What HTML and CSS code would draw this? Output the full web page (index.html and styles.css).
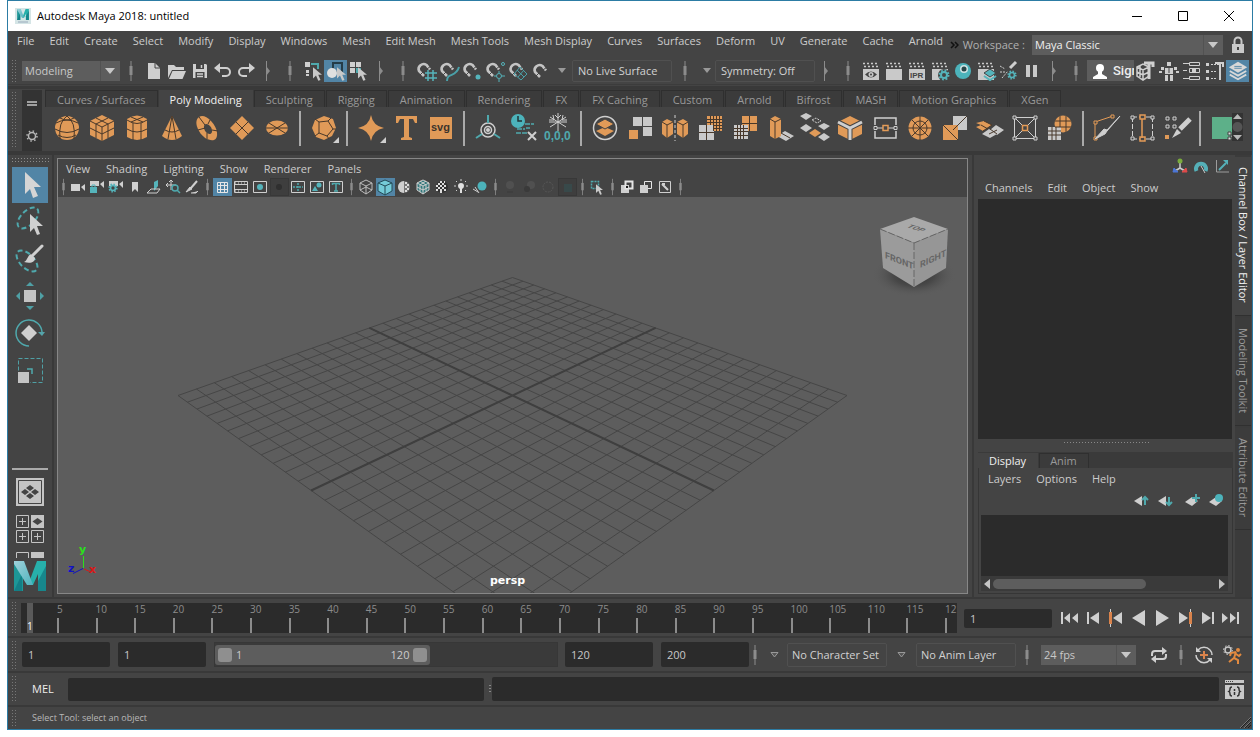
FILE: index.html
```html
<!DOCTYPE html>
<html lang="en">
<head>
<meta charset="utf-8">
<title>Autodesk Maya 2018: untitled</title>
<link rel="stylesheet" href="styles.css">
</head>
<body>
<svg class="defs" aria-hidden="true">
  <defs>
    <linearGradient id="mayaLeft" x1="0" y1="0" x2="1" y2="1"><stop offset="0" stop-color="#9fd3dc"/><stop offset="1" stop-color="#4fb3bd"/></linearGradient>
    <symbol id="maya-m" viewBox="0 0 32 30">
      <path fill="#1d9797" d="M0 0h9v30H0z"/><path fill="#137f86" d="M0 30 8 13v17z"/>
      <path fill="#27b0ab" d="M23 0h9v30h-8V13l-5 11h-5z"/><path fill="#17878c" d="M32 5 24 20v10h8z"/>
      <path fill="url(#mayaLeft)" d="M0 0h10l9 24h-6L0 3z"/>
    </symbol>
    <symbol id="sep" viewBox="0 0 6 22"><path d="M3 1v20" stroke="#8c8c8c"/><path d="M3 6v9" stroke="#8c8c8c" stroke-width="3"/></symbol>
    <symbol id="fold" viewBox="0 0 6 22"><path d="M1.500 1v20" stroke="#8c8c8c"/><path d="M1 6l4 5-4 5z" fill="#8c8c8c"/></symbol>
    <symbol id="cursor" viewBox="0 0 12 18"><path d="M0 0v15l4-4 3 7 3-1-3-7h5z" fill="#c9c9c9"/></symbol>
    <symbol id="magnet" viewBox="0 0 22 22"><path d="M15 9.500 11.500 5A5 5 0 0 0 4 11l5 5" fill="none" stroke="#c4c4c4" stroke-width="2.600"/><path d="M12 9l4-3M5 15l3-3" stroke="#444"/></symbol>
    <symbol id="clap" viewBox="0 0 22 22"><path d="M3 9h16v11H3z" fill="#c9c9c9"/><path d="M3 3.500h16M4 6.500h16" stroke="#c9c9c9" stroke-width="1.500" stroke-dasharray="2 2"/></symbol>
    <symbol id="gear" viewBox="0 0 12 12"><circle cx="6" cy="6" r="4.500" fill="none" stroke="currentColor" stroke-width="2" stroke-dasharray="1.800 1.730"/><circle cx="6" cy="6" r="3" fill="none" stroke="currentColor" stroke-width="2"/></symbol>
    <symbol id="layers" viewBox="0 0 24 24"><path d="M3 16l9 5 9-5M3 12l9 5 9-5" fill="none" stroke="#d8d8d8" stroke-width="2"/><path d="M12 2l10 6-10 6L2 8z" fill="#d8d8d8"/><path d="M8 7h8M8 9h8" stroke="#5285a6"/></symbol>
    <symbol id="caret" viewBox="0 0 10 6"><path d="M0 0h10L5 6z" fill="currentColor"/></symbol>
  </defs>
</svg>
<div class="window">
  <header class="titlebar">
    <svg class="app-icon" width="16" height="16"><rect width="16" height="16" fill="#d5e5e6"/><use href="#maya-m" x="2" y="1" width="12" height="11"/><path d="M3 14h10" stroke="#9ab" /></svg>
    <h1>Autodesk Maya 2018: untitled</h1>
    <div class="win-buttons">
      <button aria-label="Minimize"><svg width="12" height="12"><path d="M1 6.500h10" stroke="#000"/></svg></button>
      <button aria-label="Maximize"><svg width="12" height="12"><path d="M1.500 1.500h9v9h-9z" fill="none" stroke="#000"/></svg></button>
      <button aria-label="Close"><svg width="12" height="12"><path d="M1 1l10 10M11 1 1 11" stroke="#000"/></svg></button>
    </div>
  </header>

  <div class="menubar">
    <nav class="menus main-menus">
      <button>File</button><button>Edit</button><button>Create</button><button>Select</button><button>Modify</button><button>Display</button><button>Windows</button><button>Mesh</button><button>Edit Mesh</button><button>Mesh Tools</button><button>Mesh Display</button><button>Curves</button><button>Surfaces</button><button>Deform</button><button>UV</button><button>Generate</button><button>Cache</button><button>Arnold</button>
    </nav>
    <div class="workspace">
      <svg width="9" height="8"><path d="M1 1l3 3-3 3M5 1l3 3-3 3" fill="none" stroke="#111" stroke-width="1.500"/></svg>
      <label for="ws">Workspace :</label>
      <span class="combo ws"><select id="ws"><option>Maya Classic</option></select><svg width="10" height="6"><use href="#caret"/></svg></span>
      <button class="lock" aria-label="Lock workspace"><svg width="14" height="18"><path d="M3.500 8V5a3.500 3.500 0 0 1 7 0v3" fill="none" stroke="#c9c9c9" stroke-width="2"/><path d="M1 8h12v9H1z" fill="#c9c9c9"/><path d="M7 11v3" stroke="#444" stroke-width="2"/></svg></button>
    </div>
  </div>

  <div class="statusline">
    <i class="grip"></i>
    <span class="combo mode"><select aria-label="Menu set"><option>Modeling</option></select><svg width="10" height="6"><use href="#caret"/></svg></span>
    <svg class="sp"><use href="#sep"/></svg>
    <button class="ic" aria-label="New scene"><svg><path d="M5 3h7l5 5v11H5z" fill="#cfcfcf"/><path d="M12 3v5h5" stroke="#444" fill="none"/></svg></button>
    <button class="ic" aria-label="Open scene"><svg><path d="M2 18V5h6l2 2h8v3H6z" fill="#cfcfcf"/><path d="M6.500 11H20l-3.500 8H3z" fill="#cfcfcf"/></svg></button>
    <button class="ic" aria-label="Save scene"><svg><path d="M4 4h13l1 1v13H4z" fill="#cfcfcf"/><path d="M7 4h8v5H7zM6.500 12h9v6h-9z" fill="#444"/><path d="M8 14h6M8 16.500h6M12.500 5v3" stroke="#cfcfcf" stroke-width="1.500"/></svg></button>
    <button class="ic" aria-label="Undo"><svg><path d="M6 8h8a4 4 0 0 1 0 8h-4" fill="none" stroke="#cfcfcf" stroke-width="2"/><path d="M2 8l6-5v10z" fill="#cfcfcf"/></svg></button>
    <button class="ic" aria-label="Redo"><svg><path d="M16 8H8a4 4 0 0 0 0 8h4" fill="none" stroke="#cfcfcf" stroke-width="2"/><path d="M20 8l-6-5v10z" fill="#cfcfcf"/></svg></button>
    <svg class="sp"><use href="#fold"/></svg>
    <svg class="sp"><use href="#sep"/></svg>
    <button class="ic" aria-label="Select by hierarchy"><svg><path d="M3 2h5v5H3z" fill="#cfcfcf"/><path d="M4 10h3v3H4zM4 14h3v2H4z" fill="#cfcfcf"/><path d="M9 4h7v5" stroke="#4fa9ad" stroke-width="2" fill="none"/><use href="#cursor" x="11" y="7" width="9" height="14"/></svg></button>
    <button class="ic on" aria-label="Select by object"><svg><path d="M8 3h9v9H8z" fill="none" stroke="#243c48" stroke-width="2"/><circle cx="7" cy="13" r="5" fill="#e0e0e0"/><use href="#cursor" x="12" y="7" width="9" height="14"/></svg></button>
    <button class="ic" aria-label="Select by component"><svg><path d="M2 2h5v5H2zM8 2h5v5H8zM2 8h5v5H2z" fill="#cfcfcf"/><path d="M8 8h5v5H8z" fill="#4fa9ad"/><use href="#cursor" x="10" y="7" width="9" height="14"/></svg></button>
    <svg class="sp"><use href="#fold"/></svg>
    <svg class="sp"><use href="#sep"/></svg>
    <button class="ic" aria-label="Snap to grids"><svg><use href="#magnet"/><path d="M13 10v11M18 10v11M10 13h12M10 18h12" stroke="#55b4bb" stroke-width="1.500"/></svg></button>
    <button class="ic" aria-label="Snap to curves"><svg><use href="#magnet"/><path d="M9 21c0-9 9-3 12-14" stroke="#4aa0a8" stroke-width="2" fill="none"/></svg></button>
    <button class="ic" aria-label="Snap to points"><svg><use href="#magnet"/><circle cx="17" cy="17" r="2.500" fill="#55b4bb"/></svg></button>
    <button class="ic" aria-label="Snap to projected center"><svg><use href="#magnet"/><g fill="none" stroke="#55b4bb"><circle cx="15" cy="16" r="2.500"/><circle cx="19" cy="4" r="1.500"/><path d="M15 11v2M15 19v3M10 16h2M18 16h3"/></g></svg></button>
    <button class="ic" aria-label="Snap to view planes"><svg><use href="#magnet"/><path d="M13 7l7 7-6 6-7-6zM17 10l-6 7M10 10l7 7" fill="none" stroke="#4aa0a8"/></svg></button>
    <button class="ic" aria-label="Make live"><svg><use href="#magnet" x="1" y="1"/></svg></button>
    <button class="drop" aria-label="Live surface history"><svg width="8" height="5"><use href="#caret"/></svg></button>
    <input class="box" aria-label="Live surface" value="No Live Surface" readonly>
    <svg class="sp wide"><use href="#sep"/></svg>
    <button class="drop sym-drop" aria-label="Symmetry options"><svg width="8" height="5"><use href="#caret"/></svg></button>
    <input class="box" aria-label="Symmetry" value="Symmetry: Off" readonly>
    <svg class="sp"><use href="#fold"/></svg>
    <svg class="sp"><use href="#sep"/></svg>
    <button class="ic" aria-label="Render view"><svg><use href="#clap"/><path d="M5 14.500q6-6 12 0q-6 6-12 0z" fill="#444"/><circle cx="11" cy="14.500" r="2.500" fill="#c9c9c9"/><circle cx="11" cy="14.500" r="1" fill="#444"/></svg></button>
    <button class="ic" aria-label="Render frame"><svg><use href="#clap"/></svg></button>
    <button class="ic" aria-label="IPR render"><svg><use href="#clap"/><text x="4" y="18" font-size="8" font-weight="700" fill="#444">IPR</text></svg></button>
    <button class="ic" aria-label="Render settings"><svg color="#55b4bb"><use href="#clap"/><circle cx="15" cy="15" r="6" fill="#444"/><use href="#gear" x="9" y="9" width="12" height="12"/></svg></button>
    <button class="ic" aria-label="Hypershade"><svg><circle cx="11" cy="11" r="8" fill="#4cb3bb"/><circle cx="12" cy="9" r="4" fill="#cfe3e4"/><circle cx="12" cy="9" r="2.500" fill="#27474a"/></svg></button>
    <button class="ic" aria-label="Render setup"><svg><use href="#clap"/><path d="M15 9l6 4-6 4-6-4z" fill="#55b4bb" stroke="#444"/><path d="M9 16l6 4 6-4" fill="none" stroke="#55b4bb" stroke-width="2"/></svg></button>
    <button class="ic" aria-label="Light editor"><svg color="#55b4bb"><path d="M18 2l-6 6" stroke="#cfcfcf" stroke-width="3"/><path d="M2 6l5 3M2 12h5M4 18l6-7" stroke="#cfcfcf" stroke-dasharray="2 1"/><use href="#gear" x="9" y="10" width="10" height="10"/></svg></button>
    <button class="ic" aria-label="Pause viewport"><svg><path d="M5 5h4v12H5zM12 5h4v12h-4z" fill="#c9c9c9"/></svg></button>
    <svg class="sp"><use href="#fold"/></svg>
    <svg class="sp"><use href="#sep"/></svg>
    <button class="signin"><svg width="16" height="18"><circle cx="8" cy="6" r="4" fill="#fff"/><path d="M6 8h4v4l5 3v2H1v-2l5-3z" fill="#fff"/></svg>Sign In</button>
    <button class="ic" aria-label="Modeling toolkit"><svg><path d="M2 7l6-3 6 3v9l-6 4-6-4zM2 7l6 3 6-3M8 10v9M5 6v11M2 12l6 3 6-3" fill="none" stroke="#cfcfcf" stroke-width="1.500"/><path d="M9 3h9v4M14 4v15" stroke="#cfcfcf" stroke-width="3" fill="none"/></svg></button>
    <button class="ic" aria-label="Character controls"><svg><path d="M9 2h4v4H9zM7 8h8v6H7zM7 15h3v6H7zM12 15h3v6h-3zM3 7h3v3H3zM16 7h3v3h-3zM1 11h3v2H1zM18 11h3v2h-3z" fill="#cfcfcf"/><path d="M11 8v5" stroke="#444"/></svg></button>
    <button class="ic" aria-label="Attribute editor"><svg><path d="M2 3.500h6M2 10.500h4M2 18.500h6" stroke="#cfcfcf"/><path d="M8.500 2.500h10v3h-10zM8.500 8.500h10v4h-10zM8.500 16.500h10v3h-10z" fill="none" stroke="#cfcfcf"/><path d="M11 9h4v3h-4z" fill="#cfcfcf"/></svg></button>
    <button class="ic" aria-label="Tool settings"><svg><path d="M2 3h3v3H2zM2 10h3v3H2zM2 17h3v3H2z" fill="#cfcfcf"/><path d="M7 4.500h8M7 11.500h5M7 18.500h5" stroke="#cfcfcf" stroke-dasharray="2 1"/><path d="M11 3h8v4M16 4v16" stroke="#cfcfcf" stroke-width="2" fill="none"/></svg></button>
    <button class="ic on" aria-label="Channel box"><svg viewBox="0 0 24 24"><use href="#layers"/></svg></button>
  </div>

  <section class="shelf">
    <i class="grip"></i>
    <div class="shelf-side">
      <button aria-label="Shelf menu"><svg width="10" height="6"><path d="M0 1h10M0 4h10" stroke="#a0a0a0" stroke-width="2"/></svg></button>
      <button aria-label="Shelf options"><svg width="12" height="12"><circle cx="6" cy="6" r="3.500" fill="none" stroke="#b8b8b8" stroke-width="1.500"/><circle cx="6" cy="6" r="5" fill="none" stroke="#b8b8b8" stroke-width="1.500" stroke-dasharray="1.500 2.430"/></svg></button>
    </div>
    <div class="shelf-main">
      <nav class="tabs"><button>Curves / Surfaces</button><button class="active">Poly Modeling</button><button>Sculpting</button><button>Rigging</button><button>Animation</button><button>Rendering</button><button>FX</button><button>FX Caching</button><button>Custom</button><button>Arnold</button><button>Bifrost</button><button>MASH</button><button>Motion Graphics</button><button>XGen</button></nav>
      <div class="shelf-icons">
        <button aria-label="Sphere"><svg><circle cx="16" cy="16" r="12" class="o"/><path d="M5 11q11-6 22 0M4 17q12 7 24 0M7 23q9 5 18 0M16 4q-9 6-7 23M16 4q9 6 7 23M9 6q7 4 14 0" class="k"/></svg></button>
        <button aria-label="Cube"><svg><path d="M16 3l12 6v14l-12 6-12-6V9z" class="o"/><path d="M4 9l12 6 12-6M16 15v14M10 6l12 6v14M22 6l-12 6v14M4 16l12 6 12-6" class="k"/></svg></button>
        <button aria-label="Cylinder"><svg><path d="M6 7q10-7 20 0v18q-10 6-20 0z" class="o"/><path d="M6 8q10 7 20 0M6 17q10 6 20 0M12 11v17M20 11v17M10 5l12 5M22 5l-12 5" class="k"/></svg></button>
        <button aria-label="Cone"><svg><path d="M16 4l10 20q-10 8-20 0z" class="o"/><path d="M16 4l-4 23M16 4l4 23M9 18q7 4 14 0" class="k"/></svg></button>
        <button aria-label="Torus"><svg><path d="M8 5q5-3 12 4c7 7 8 17 3 19-5 1-11-2-15-9S5 7 8 5z" class="o"/><ellipse cx="17" cy="17" rx="3.500" ry="5.500" transform="rotate(-30 17 17)" fill="#444"/><path d="M8 5l6 8M19 8l-2 4M27 19l-6-1M16 27l0-6M7 18l7-2" class="k"/></svg></button>
        <button aria-label="Plane"><svg><path d="M16 4l12 12-12 12L4 16z" class="o"/><path d="M10 10l12 12M22 10L10 22" class="k"/></svg></button>
        <button aria-label="Disc"><svg><ellipse cx="16" cy="16" rx="11" ry="7.500" class="o"/><path d="M5 16h22M8 11l16 10M24 11L8 21" class="k"/></svg></button>
        <i class="bar"></i>
        <button aria-label="Platonic solid"><svg><path d="M16 4l9 3 3 9-4 8-8 4-8-3-4-9 3-8z" class="o"/><path d="M11 10l9-1 5 8-6 7-8-3zM11 10L7 7M20 9l3-3M25 17l3 0M19 24l2 3M11 21l-4 3" class="k"/><path d="M31 25v6h-6z" fill="#cfcfcf"/></svg></button>
        <i class="bar"></i>
        <button aria-label="Super shapes"><svg><path d="M16 3q2 11 13 13q-11 2-13 13q-2-11-13-13q11-2 13-13z" class="o"/><path d="M31 25v6h-6z" fill="#cfcfcf"/></svg></button>
        <button aria-label="Type"><svg><path d="M6 4h21v7h-2l-2-4h-4v18l3 1v2H11v-2l3-1V7h-4l-2 4H6z" class="o"/></svg></button>
        <button aria-label="SVG"><svg><path d="M5 5h22v22H5z" class="o"/><text x="6" y="19" font-size="11" font-weight="700" fill="#3c342c">svg</text></svg></button>
        <i class="bar"></i>
        <button aria-label="Center pivot"><svg><g fill="none" stroke="#cfcfcf" stroke-width="1.500"><circle cx="16" cy="18" r="7"/><circle cx="16" cy="18" r="3.500"/></g><circle cx="16" cy="18" r="2" fill="#cfcfcf"/><path d="M16 3v8M10 22l-6 4M22 22l6 4" class="t w2"/></svg></button>
        <button aria-label="Delete history"><svg><circle cx="11" cy="9" r="7" fill="#4cb3bb"/><path d="M11 4v5h4" stroke="#1f3537" stroke-width="1.500" fill="none"/><path d="M18 12h9M19 16h4M10 17h8M9 21h11" class="t" stroke-dasharray="5 1"/><path d="M21 20l8 8M29 20l-8 8" stroke="#cfcfcf" stroke-width="2"/></svg></button>
        <button aria-label="Freeze transformations"><svg><path d="M16 1v18M8 5l16 10M24 5L8 15M13 3l3 3 3-3M7 10h18M11 3l1 5-5 0M21 3l-1 5 5 0" stroke="#cfcfcf" fill="none"/><text x="2" y="28" font-size="12" font-weight="700" fill="#4fa9ad">0,0,0</text></svg></button>
        <i class="bar"></i>
        <button aria-label="Combine"><svg><circle cx="16" cy="16" r="11.500" fill="none" stroke="#cfcfcf" stroke-width="1.500"/><path d="M16 15l9 4-9 5-9-5z" class="o"/><path d="M16 7l9 5-9 5-9-5z" class="o" stroke="#444"/></svg></button>
        <button aria-label="Separate"><svg><path d="M9 5h9v9H9zM19 5h9v9h-9zM19 15h9v9h-9z" class="g"/><path d="M5 18h9v9H5z" class="o"/></svg></button>
        <button aria-label="Mirror"><svg><path d="M3 10l5-3 6 3v12l-6 4-5-4zM18 10l6-3 5 3v12l-5 4-6-4z" class="o"/><path d="M3 10l5 3 6-3M8 13v13M18 10l6 3 5-3M24 13v13" class="k"/><path d="M16 3v26" stroke="#cfcfcf" stroke-dasharray="3 2"/></svg></button>
        <button aria-label="Smooth"><svg><path d="M5 13h15v15H5z" class="g"/><path d="M13 4h15v15h-9v-6h-6z" class="o"/><path d="M16.500 4v9M19.500 4v15M22.500 4v15M25.500 4v15M13 7.500h15M13 10.500h15M19 13.500h9M19 16.500h9M12.500 13v15M5 20.500h15" class="k"/></svg></button>
        <button aria-label="Reduce"><svg><path d="M5 13h14v14H5z" class="g"/><path d="M13 4h15v15h-9v-6h-6z" class="o"/><path d="M20.500 4v15M13 11.500h15M8.500 13v14M11.500 13v14M14.500 13v14M5 16.500h14M5 19.500h14M5 23.500h14" class="k"/></svg></button>
        <button aria-label="Extrude"><svg><path d="M13 24l8-5 9 5-8 5z" class="g"/><path d="M26 21l-8 5M6 7l5-3 6 3v17l-6 3-5-3z" class="o"/><path d="M6 7l5 3 6-3M11 10v17M17 21l9 5" class="k"/></svg></button>
        <button aria-label="Bridge"><svg><path d="M7 1l6 3-6 4-6-4zM25 11l6 3-6 4-6-4zM7 12l6 4-6 4-6-4zM25 21l6 4-6 4-6-4z" class="g"/><path d="M16 17l6 4-6 4-6-4z" class="o"/><path d="M13 8l4-2 5 3-4 2z" stroke="#cfcfcf" fill="none" stroke-dasharray="2 1"/></svg></button>
        <button aria-label="Bevel"><svg><path d="M16 4l12 6v12l-12 6-12-6V10z" class="o"/><path d="M4 10l12 6 12-6M16 16v12" stroke="#444" stroke-width="5" fill="none"/><path d="M4 10l12 6 12-6M16 16v12" stroke="#cfcfcf" stroke-width="3" fill="none"/></svg></button>
        <button aria-label="Insert edge loop"><svg><path d="M6 13V6h21v7M6 19v7h21v-7" fill="none" stroke="#cfcfcf" stroke-width="1.500"/><path d="M5 14.500h3v3H5zM25 14.500h3v3h-3zM8 16h17" fill="#444" stroke="#cfcfcf"/><path d="M14 13.500h5v5h-5z" fill="#444" stroke="#e39b57" stroke-width="1.500"/></svg></button>
        <button aria-label="Circularize"><svg><circle cx="16" cy="16" r="11.500" class="o"/><circle cx="16" cy="16" r="7" class="k"/><path d="M16 4v24M4 16h24M8 8l16 16M24 8L8 24" class="k"/></svg></button>
        <button aria-label="Triangulate"><svg><path d="M14 4h14v14H14z" class="g"/><path d="M4 13h15v15H4z" class="o"/><path d="M28 4L14 18M4 13l15 15" class="k"/></svg></button>
        <button aria-label="Duplicate face"><svg><path d="M22 13l8 5-7 5-7-5zM15 17l8 5-7 4-8-4z" class="g"/><path d="M10 9l8 4-9 6-7-4 5-2-5-2z" class="o"/><path d="M10 9l8 4-9 6M7 13l7 4M16 17l7 5M23 18l-8 4" class="k"/></svg></button>
        <button aria-label="Poke"><svg><path d="M5.500 5.500h21v21h-21zM6 6l20 20M26 6L6 26" fill="none" stroke="#cfcfcf"/><path d="M4 4h3v3H4zM25 4h3v3h-3zM4 25h3v3H4zM25 25h3v3h-3z" fill="#444" stroke="#cfcfcf"/><path d="M13.500 13.500h5v5h-5z" fill="#444" stroke="#e39b57" stroke-width="1.500"/></svg></button>
        <button aria-label="Project mesh"><svg><circle cx="19" cy="12" r="8.500" class="o"/><path d="M4 15h13v13H4z" class="g"/><path d="M8 15v13M12 15v13M4 19h13M4 23h13M11 9h16M11 15h16M16 4v11M22 4v16" class="k"/></svg></button>
        <i class="bar"></i>
        <button aria-label="Multi-cut"><svg><path d="M4 11v16M4 10l18-6" stroke="#e39b57" fill="none"/><path d="M3 9h3v3H3zM20 3h3v3h-3zM3 25h3v3H3z" fill="#444" stroke="#e39b57"/><path d="M29 4l-13 14-3-1L4 27l10-5 2-3z" fill="#cfcfcf" stroke="#cfcfcf"/></svg></button>
        <button aria-label="Target weld"><svg><path d="M6.500 5v22M26.500 5v22M6 5h21M6 27h21" fill="none" stroke="#cfcfcf" stroke-dasharray="5 2"/><path d="M5 4h3v3H5zM25 4h3v3h-3zM5 25h3v3H5zM25 25h3v3h-3z" fill="#444" stroke="#cfcfcf"/><path d="M16 7v19M14 3h5v4h-5zM14 25h5v4h-5z" fill="#444" stroke="#e39b57" stroke-width="1.500"/></svg></button>
        <button aria-label="Quad draw"><svg><path d="M5 5h3v3H5zM12 5h3v3h-3zM5 13h3v3H5zM12 13h3v3h-3z" fill="#444" stroke="#cfcfcf"/><path d="M4 23h4v4H4z" class="o"/><path d="M29 7L19 17" stroke="#cfcfcf" stroke-width="5"/><path d="M16 17l4 4-9 5z" fill="#cfcfcf"/></svg></button>
        <i class="bar"></i>
        <button aria-label="UV editor"><svg><path d="M4 5h20v22H4z" fill="#5db089"/><path d="M20 20h3v3h-3zM20 25h3v3h-3zM23 23h3v3h-3z" fill="#ddd" stroke="#444"/></svg></button>
      </div>
      <div class="shelf-scroll"><svg width="11" height="28"><path d="M1 6h9L5.500 1zM1 22h9l-4.500 5z" fill="#b8b8b8"/><circle cx="5.500" cy="14" r="5" fill="#555"/></svg></div>
    </div>
  </section>

  <main class="workarea">
    <aside class="toolbox">
      <i class="hgrip"></i>
      <button class="on" aria-label="Select tool"><svg><path d="M13 5v22l5-5 3 9 5-2-4-9h7z" fill="#d5d5d5"/></svg></button>
      <button aria-label="Lasso tool"><svg><ellipse cx="16" cy="14" rx="13" ry="7" transform="rotate(-45 16 14)" class="t dash"/><path d="M18 10v18l4-4 3 7 3-1-3-8h6z" fill="#d0d0d0"/></svg></button>
      <button aria-label="Paint selection tool"><svg><ellipse cx="15" cy="20" rx="13" ry="7" transform="rotate(45 15 20)" class="t dash"/><path d="M30 5l-9 9" stroke="#d0d0d0" stroke-width="3" stroke-linecap="round"/><path d="M19 13l4 4c0 4-4 6-11 4 4-2 3-6 7-8z" fill="#d0d0d0"/></svg></button>
      <button aria-label="Move tool"><svg><path d="M12 12h12v12H12z" fill="#c4c4c4"/><path d="M14 8h8l-4-4zM14 28h8l-4 4zM8 14v8l-4-4zM28 14v8l4-4z" fill="#4fa0a5"/></svg></button>
      <button aria-label="Rotate tool"><svg><path d="M17 31A13 13 0 1 1 30 17" class="t"/><path d="M26 17h7l-3 4z" fill="#55a4aa"/><path d="M17 10l8 8-8 8-8-8z" fill="#cfcfcf"/></svg></button>
      <button aria-label="Scale tool"><svg><path d="M6.500 6.500h24v24h-24z" fill="none" stroke="#4fa0a5" stroke-dasharray="4 2"/><path d="M15 17h5v5" class="t"/><path d="M5 19h13v13H5z" fill="#444"/><path d="M6 20h11v11H6z" fill="#c4c4c4"/></svg></button>
      <div class="layouts">
        <button class="lay" aria-label="Single pane"><svg width="28" height="28"><path d="M0 0h28v28H0z" fill="#c4c4c4"/><path d="M2.500 2.500h23v23h-23z" fill="none" stroke="#444"/><path d="M14 7l4 3-4 3-4-3zM14 15l4 3-4 3-4-3zM9 11l4 3-4 3-4-3zM19 11l4 3-4 3-4-3z" fill="#444"/></svg></button>
        <button class="lay" aria-label="Four panes"><svg width="28" height="28"><path d="M.5.500h12v12H.5zM.5 15.500h12v12H.5zM15.500 15.500h12v12h-12zM3 6.500h7M6.500 3v7M3 21.500h7M6.500 18v7M18 21.500h7M21.500 18v7" fill="none" stroke="#c4c4c4"/><path d="M15 0h13v13H15z" fill="#c4c4c4"/><path d="M21.500 3l5 3.500-5 3.500-5-3.500z" fill="#444"/></svg></button>
        <button class="lay cut" aria-label="Two panes"><svg width="28" height="6"><path d="M.5 6V.5h12V6" fill="none" stroke="#c4c4c4"/><path d="M15 0h13v6H15z" fill="#c4c4c4"/></svg></button>
        <svg width="32" height="30"><use href="#maya-m"/></svg>
      </div>
    </aside>

    <section class="panel">
      <nav class="menus panel-menus"><button>View</button><button>Shading</button><button>Lighting</button><button>Show</button><button>Renderer</button><button>Panels</button></nav>
      <div class="panel-tools">
        <svg class="ps"><use href="#sep"/></svg>
        <button aria-label="Select camera"><svg><path d="M2 6h9v7H2zM12 9l4-3v7z" fill="#cfcfcf"/></svg></button>
        <button aria-label="Lock camera"><svg><path d="M2 3h9v5H2zM12 6l4-3v7z" fill="#cfcfcf"/><path d="M2 9h7v6H2z" fill="#55b4bb"/><path d="M4 9V7h3v2" stroke="#55b4bb" fill="none"/></svg></button>
        <button aria-label="Camera attributes"><svg color="#55b4bb"><path d="M2 3h9v5H2zM12 6l4-3v7z" fill="#cfcfcf"/><use href="#gear" x="1" y="5" width="10" height="10"/></svg></button>
        <button aria-label="Bookmarks"><svg><path d="M6 4h6v10l-3-3-3 3z" fill="#cfcfcf"/></svg></button>
        <button aria-label="Image plane"><svg><path d="M9 9V4l4-2v6l-4 5z" fill="#55b4bb"/><path d="M2 15l4-4 9 0-3 4z" fill="none" stroke="#cfcfcf"/></svg></button>
        <button aria-label="2D pan and zoom"><svg><path d="M2 7h10M7 2v10M5 4l2-2 2 2M4 5L2 7l2 2" stroke="#cfcfcf" fill="none"/><circle cx="11" cy="10" r="3" class="t"/><path d="M13 12l3 3" class="t"/></svg></button>
        <button aria-label="Grease pencil"><svg><path d="M14 3l-6 7" stroke="#cfcfcf" stroke-width="2"/><path d="M7 9l2 2-6 3zM8 15h5l2-2" fill="#cfcfcf" stroke="#cfcfcf"/></svg></button>
        <svg class="ps"><use href="#sep"/></svg>
        <button class="on" aria-label="Grid"><svg><path d="M4.500 4.500h10v10h-10zM4 7.500h11M4 11.500h11M7.500 4v11M11.500 4v11" fill="none" stroke="#e6e6e6"/></svg></button>
        <button aria-label="Film gate"><svg><path d="M2.500 3.500h13v11h-13zM3 6.500h12M3 11.500h12" fill="none" stroke="#cfcfcf"/><path d="M3 5h12M3 13h12" stroke="#cfcfcf" stroke-dasharray="1 2"/></svg></button>
        <button aria-label="Resolution gate"><svg><path d="M2.500 3.500h13v11h-13z" fill="none" stroke="#cfcfcf"/><circle cx="9" cy="9" r="3" fill="#55b4bb"/></svg></button>
        <button class="off" aria-label="Gate mask"><svg><circle cx="8" cy="8" r="3" fill="#2f2f2f"/></svg></button>
        <button aria-label="Field chart"><svg><path d="M2.500 3.500h13v11h-13z" fill="none" stroke="#cfcfcf"/><path d="M9 5v8M4 9h10" class="t" stroke-dasharray="2 1"/></svg></button>
        <button aria-label="Safe action"><svg><path d="M2.500 3.500h13v11h-13z" fill="none" stroke="#cfcfcf"/><circle cx="11" cy="7" r="2.500" fill="#55b4bb"/><path d="M4 13l3-5 3 5z" fill="#55b4bb"/></svg></button>
        <button aria-label="Safe title"><svg><path d="M2.500 3.500h13v11h-13z" fill="none" stroke="#cfcfcf"/><path d="M5.500 7V5.500h7V7M9 5.500V13M7 13h4" class="t"/></svg></button>
        <svg class="ps"><use href="#sep"/></svg>
        <button aria-label="Wireframe"><svg><path d="M9 2l6 3v7l-6 4-6-4V5zM3 5l6 3 6-3M9 8v8M3 12l6-3 6 3" fill="none" stroke="#bdbdbd"/></svg></button>
        <button class="on" aria-label="Smooth shade"><svg><path d="M9 2l7 3v8l-7 4-7-4V5z" fill="#74cbd8"/><path d="M2 5l7 3 7-3M9 8v9M9 2l7 3v8l-7 4-7-4V5z" stroke="#234b57" fill="none"/></svg></button>
        <button aria-label="Use default material"><svg><circle cx="9" cy="9" r="6" fill="#777"/><path d="M9 3a6 6 0 0 0 0 12z" fill="#cfcfcf"/><path d="M11 4v2M11 8v2M11 12v2M13 6v2M13 10v2" stroke="#ddd" stroke-width="2"/></svg></button>
        <button aria-label="Wireframe on shaded"><svg><path d="M9 2l6 3v7l-6 4-6-4V5z" fill="#33787c"/><path d="M9 2l6 3v7l-6 4-6-4V5zM3 5l6 3 6-3M9 8v8M6 3l6 4v7M12 3L6 7v7M3 9l6 3 6-3" fill="none" stroke="#cfcfcf"/></svg></button>
        <button aria-label="Textured"><svg><circle cx="9" cy="9" r="6" fill="#333"/><path d="M5 6h8M5 10h8" stroke="#ddd" stroke-width="2" stroke-dasharray="2 2"/><path d="M3 8h12M3 12h11M7 4h5M7 14h4" stroke="#ddd" stroke-width="2" stroke-dasharray="2 2"/></svg></button>
        <button aria-label="Use all lights"><svg><path d="M6 8a3 3 0 0 1 6 0q0 2-2 3v4H8v-4Q6 10 6 8z" fill="#e0e0e0"/><path d="M2 8h2M14 8h2M9 1v2M4 3l1 1M14 3l-1 1M4 13l1-1M14 13l-1-1" stroke="#cfcfcf"/></svg></button>
        <button aria-label="Shadows"><svg><circle cx="11" cy="8" r="4.500" fill="#4cb3bb"/><path d="M2 11l5 3M4 9l4 6" stroke="#cfcfcf"/></svg></button>
        <svg class="ps"><use href="#sep"/></svg>
        <button aria-label="Ambient occlusion"><svg><circle cx="9" cy="7" r="4" fill="#505050"/><path d="M6 14h6" stroke="#3a3a3a"/></svg></button>
        <button aria-label="Motion blur"><svg><circle cx="11" cy="7" r="4" fill="#505050"/><circle cx="7" cy="11" r="3" fill="#3a3a3a"/></svg></button>
        <button aria-label="Anti-aliasing"><svg><circle cx="9" cy="9" r="5" fill="none" stroke="#575757" stroke-dasharray="2 1"/></svg></button>
        <button class="off" aria-label="Depth of field"><svg><path d="M5 5h8v8H5z" fill="#38494a"/></svg></button>
        <svg class="ps"><use href="#sep"/></svg>
        <button aria-label="Isolate select"><svg><path d="M3.500 3.500h7v7h-7z" class="t" stroke-dasharray="2 1"/><use href="#cursor" x="8" y="6" width="7" height="11"/></svg></button>
        <svg class="ps"><use href="#sep"/></svg>
        <button aria-label="X-ray"><svg><path d="M3 7h8v8H3z" fill="#cfcfcf"/><path d="M7.500 3.500h7v7h-7z" fill="none" stroke="#e6e6e6" stroke-width="2"/><path d="M8 8h2v2H8z" fill="#222"/></svg></button>
        <button aria-label="X-ray active"><svg><path d="M7.500 3.500h7v7h-7z" fill="none" stroke="#e6e6e6"/><path d="M3 7h8v8H3z" fill="#cfcfcf"/></svg></button>
        <button aria-label="X-ray joints"><svg><path d="M3.500 3.500h11v11h-11z" fill="none" stroke="#cfcfcf"/><path d="M6 6l6 6M6 6h3" stroke="#cfcfcf" stroke-width="2"/></svg></button>
        <svg class="ps"><use href="#sep"/></svg>
      </div>
      <div class="viewport">
        <svg class="scene" viewBox="58 197 909 397" preserveAspectRatio="xMidYMid slice"><path id="grid" class="grid"/><path id="gridAxis" class="grid axis"/></svg>
        <svg class="viewcube" width="90" height="96" viewBox="0 0 90 96">
          <defs><radialGradient id="shade"><stop offset="0" stop-color="#2c2c2c"/><stop offset=".5" stop-color="#3f3f3f" stop-opacity=".7"/><stop offset="1" stop-color="#5d5d5d" stop-opacity="0"/></radialGradient></defs>
          <ellipse cx="45" cy="66" rx="42" ry="22" fill="url(#shade)"/>
          <path d="M45 8l34 12-34 14L11 20z" fill="#a9a9a9"/><path d="M11 20l34 14v44L14 59z" fill="#9b9b9b"/><path d="M79 20L45 34v44l32-19z" fill="#969696"/>
          <path d="M11 20l34 14 34-14M45 34v44" fill="none" stroke="#666" stroke-dasharray="7 2"/>
          <text x="16" y="49" transform="translate(16 49) skewY(22) translate(-16 -49)">FRONT</text>
          <text x="51" y="59" transform="translate(51 59) skewY(-25) translate(-51 -59)">RIGHT</text>
          <text x="37" y="18" transform="translate(37 18) matrix(.9 .28 -.8 .4 0 0) translate(-37 -18)">TOP</text>
        </svg>
        <svg class="axes" width="34" height="34" viewBox="0 0 34 34"><path d="M16.500 24V12" stroke="#2be01c"/><path d="M16 24.500l-10 5" stroke="#1212c4"/><path d="M17 25l7 3" stroke="#d81818"/><text x="12" y="9" fill="#2be01c">y</text><text x="1" y="28" fill="#1212c4">z</text><text x="22" y="29" fill="#d81818">x</text></svg>
        <span class="camera">persp</span>
      </div>
    </section>

    <aside class="side">
      <div class="channel">
        <div class="chan-icons">
          <svg width="16" height="16"><path d="M8 4v6M8 10l-5 3M8 10l5 3" stroke="#ccc" stroke-width="1.500"/><circle cx="8" cy="3" r="2.500" fill="#7aab3d"/><path d="M1 14l1-4 4 4z" fill="#4d76d6" stroke="#4d76d6"/><path d="M15 14l-1-4-4 4z" fill="#dd4b4b" stroke="#dd4b4b"/></svg>
          <svg width="16" height="16"><path d="M3.500 13a5 5 0 1 1 9 0" fill="none" stroke="#55b0b8" stroke-width="4"/><path d="M8 8l4 7" stroke="#ccc"/></svg>
          <svg width="16" height="16"><path d="M2.500 2v12H15" fill="none" stroke="#9c9c9c"/><path d="M5 12l7-7" stroke="#55b0b8" stroke-width="2"/><path d="M9 2h5v5z" fill="#55b0b8"/></svg>
        </div>
        <nav class="menus"><button>Channels</button><button>Edit</button><button>Object</button><button>Show</button></nav>
        <div class="chan-list"></div>
        <i class="splitter"></i>
        <div class="layers">
          <nav class="tabs"><button class="active">Display</button><button>Anim</button></nav>
          <div class="layers-body">
            <nav class="menus"><button>Layers</button><button>Options</button><button>Help</button></nav>
            <div class="layer-icons">
              <button aria-label="Move layer up"><svg><path d="M0 8l8-5v10z" fill="#cfcfcf"/><path d="M11 12V4M8 7l3-3 3 3" class="t w2"/></svg></button>
              <button aria-label="Move layer down"><svg><path d="M0 8l8-5v10z" fill="#cfcfcf"/><path d="M11 4v8M8 9l3 3 3-3" class="t w2"/></svg></button>
              <button class="far" aria-label="New empty layer"><svg><path d="M0 9l7-5 6 4-6 5z" fill="#cfcfcf"/><path d="M11 1v8M7 5h8" class="t w2"/></svg></button>
              <button aria-label="New layer from selection"><svg><path d="M0 9l7-5 6 4-6 5z" fill="#cfcfcf"/><circle cx="10" cy="5" r="4" fill="#4cb3bb"/></svg></button>
            </div>
            <div class="layer-list"></div>
            <div class="hscroll"><svg width="6" height="10"><path d="M6 0v10L0 5z" fill="#c4c4c4"/></svg><div class="rail"><i></i></div><svg width="6" height="10"><path d="M0 0v10l6-5z" fill="#c4c4c4"/></svg></div>
          </div>
        </div>
      </div>
      <nav class="vtabs"><button class="active">Channel Box / Layer Editor</button><button>Modeling Toolkit</button><button>Attribute Editor</button></nav>
    </aside>
  </main>

  <div class="timeline">
    <i class="grip"></i>
    <div class="ruler"><b>1</b><span>5</span><span>10</span><span>15</span><span>20</span><span>25</span><span>30</span><span>35</span><span>40</span><span>45</span><span>50</span><span>55</span><span>60</span><span>65</span><span>70</span><span>75</span><span>80</span><span>85</span><span>90</span><span>95</span><span>100</span><span>105</span><span>110</span><span>115</span><span>12</span></div>
    <input class="field cur" aria-label="Current frame" value="1">
    <div class="playback">
      <button aria-label="Go to start"><svg><path d="M3 5v12" stroke="#cfcfcf" stroke-width="2"/><path d="M11 6v10l-6-5zM19 6v10l-6-5z" fill="#cfcfcf"/></svg></button>
      <button aria-label="Step back"><svg><path d="M6 5v12" stroke="#cfcfcf" stroke-width="2"/><path d="M17 5v12l-9-6z" fill="#cfcfcf"/></svg></button>
      <button aria-label="Previous key"><svg><path d="M5.500 2v18" stroke="#cfcfcf"/><path d="M4 5h3v12H4z" fill="#d9834c"/><path d="M17 5v12l-9-6z" fill="#cfcfcf"/></svg></button>
      <button aria-label="Play backwards"><svg><path d="M17 3v16L4 11z" fill="#cfcfcf"/></svg></button>
      <button aria-label="Play"><svg><path d="M5 3v16l13-8z" fill="#cfcfcf"/></svg></button>
      <button aria-label="Next key"><svg><path d="M16.500 2v18" stroke="#cfcfcf"/><path d="M15 5h3v12h-3z" fill="#d9834c"/><path d="M5 5v12l9-6z" fill="#cfcfcf"/></svg></button>
      <button aria-label="Step forward"><svg><path d="M16 5v12" stroke="#cfcfcf" stroke-width="2"/><path d="M5 5v12l9-6z" fill="#cfcfcf"/></svg></button>
      <button aria-label="Go to end"><svg><path d="M18 5v12" stroke="#cfcfcf" stroke-width="2"/><path d="M2 6v10l6-5zM10 6v10l6-5z" fill="#cfcfcf"/></svg></button>
    </div>
  </div>

  <div class="range">
    <i class="grip"></i>
    <input class="field" aria-label="Animation start" value="1">
    <input class="field" aria-label="Playback start" value="1">
    <div class="range-track"><div class="range-bar"><button aria-label="Range start"></button><span>1</span><span class="end">120</span><button aria-label="Range end"></button></div></div>
    <input class="field" aria-label="Playback end" value="120">
    <input class="field" aria-label="Animation end" value="200">
    <svg class="sp thin"><use href="#sep"/></svg>
    <button class="drop d1" aria-label="Character set options"><svg width="9" height="6"><path d="M1 .5h7L4.500 5z" fill="#555" stroke="#999"/></svg></button>
    <input class="box" aria-label="Character set" value="No Character Set" readonly>
    <button class="drop d2" aria-label="Anim layer options"><svg width="9" height="6"><path d="M1 .5h7L4.500 5z" fill="#555" stroke="#999"/></svg></button>
    <input class="box" aria-label="Anim layer" value="No Anim Layer" readonly>
    <svg class="sp"><use href="#sep"/></svg>
    <span class="combo fps"><select aria-label="Frame rate"><option>24 fps</option></select><svg width="10" height="6"><use href="#caret"/></svg></span>
    <button class="ic loop" aria-label="Loop"><svg><path d="M4 12v-2q0-3 3-3h8M18 10v2q0 3-3 3H7" fill="none" stroke="#cfcfcf" stroke-width="2"/><path d="M14 3l5 4-5 4zM8 11l-5 4 5 4z" fill="#cfcfcf"/></svg></button>
    <svg class="sp"><use href="#sep"/></svg>
    <button class="ic" aria-label="Auto key"><svg><path d="M5 6a8 8 0 0 1 12 0M17 16a8 8 0 0 1-12 0M3 11q0 3 2 5M19 11q0-3-2-5" fill="none" stroke="#cfcfcf" stroke-width="1.500"/><path d="M3 3v5h5zM19 19v-5h-5z" fill="#cfcfcf"/><path d="M11 7v8M7 11h3M12 11h3" stroke="#d9834c" stroke-width="2"/></svg></button>
    <button class="ic prefs" aria-label="Animation preferences"><svg><circle cx="6" cy="6" r="3" fill="none" stroke="#c9c9c9" stroke-width="1.500"/><circle cx="6" cy="6" r="4.500" fill="none" stroke="#c9c9c9" stroke-dasharray="1.500 2"/><circle cx="16" cy="6" r="2" fill="#e28a3f"/><path d="M14 8l-5 1-1 3M14 8l-2 6-5 4M12 14l4 2 0 4M14 10l3 2 2-2" fill="none" stroke="#e28a3f" stroke-width="2"/></svg></button>
  </div>

  <div class="command">
    <i class="grip"></i>
    <label for="mel">MEL</label>
    <input id="mel" class="field mel"><i class="minigrip"></i>
    <output class="result"></output>
    <button class="script" aria-label="Script editor"><svg width="19" height="19"><path d="M0 0h19v19H0z" fill="#c9c9c9"/><path d="M1 1.500h8" stroke="#444" stroke-dasharray="1 1"/><path d="M0 4h19" stroke="#444" stroke-width="2"/><path d="M7 7q-2 0-2 2t-1 2.500q1 .5 1 2.500t2 2M12 7q2 0 2 2t1 2.500q-1 .5-1 2.500t-2 2M9.500 9v2M9.500 12v3" fill="none" stroke="#333" stroke-width="1.500"/></svg></button>
  </div>

  <footer class="helpline"><i class="grip"></i><span>Select Tool: select an object</span><svg width="13" height="13"><path d="M2 12L12 2M6 12l6-6M9 12l3-3" stroke="#1e1e1e"/><path d="M1 12L12 1M5 12l7-7" stroke="#777"/></svg></footer>
</div>
<script src="script.js"></script>
</body>
</html>
```

FILE: styles.css
```css
* { box-sizing: border-box; }
body { margin: 0; background: #fff; font: 11px/16px "Open Sans", "Noto Sans", sans-serif; color: #ccc; }
button, input, select { font: inherit; color: inherit; margin: 0; padding: 0; border: 0; background: none; border-radius: 0; }
button { display: block; white-space: nowrap; }
input { min-width: 0; }
svg { display: block; flex: none; }
.defs { position: absolute; width: 0; height: 0; }

.window { height: calc(100vh - 7px); min-height: 640px; margin: 0 7px 7px; border: 1px solid #2c7ca4; display: flex; flex-direction: column; background: #444; overflow: hidden; }
.titlebar { height: 30px; flex: none; display: flex; align-items: center; background: #fff; color: #000; padding-left: 7px; gap: 6px; }
.titlebar h1 { font: inherit; margin: 0; }
.win-buttons { margin-left: auto; display: flex; }
.win-buttons button { width: 46px; height: 28px; display: grid; place-items: center; }

.menus { display: flex; gap: 15px; }
.menubar { height: 26px; flex: none; display: flex; justify-content: space-between; padding-left: 9px; }
.main-menus { padding-top: 2px; align-items: flex-start; }
.workspace { display: flex; align-items: center; gap: 4px; padding-top: 2px; }
.workspace label { color: #b0b0b0; margin-right: 3px; white-space: nowrap; }
.combo { position: relative; display: flex; height: 20px; background: #5d5d5d; color: #c8c8c8; }
.combo select { appearance: none; width: 100%; padding: 0 24px 0 3px; }
.combo svg { position: absolute; right: 5px; top: 7px; color: #c8c8c8; pointer-events: none; }
.combo::after { content: ""; position: absolute; right: 19px; top: 0; bottom: 0; border-left: 1px solid #525252; }
.ws { width: 191px; color: #f0f0f0; }
.lock { width: 22px; margin-right: 3px; display: grid; place-items: center; }

.grip { flex: none; width: 5px; align-self: stretch; margin: 2px 0; background: radial-gradient(circle, #777 0 0.5px, transparent 1px) 0 0 / 3px 3px; }
.statusline { height: 28px; flex: none; display: flex; align-items: center; padding: 0 2px 0 3px; border-bottom: 1px solid #3c3c3c; }
.statusline .grip { margin-right: 6px; }
.mode { width: 98px; }
.sp { width: 22px; height: 22px; }
.sp.wide { width: 26px; }
.sp.thin { width: 12px; }
.ic { width: 23px; height: 22px; flex: none; display: grid; place-items: center; }
.ic svg { width: 22px; height: 22px; }
.on { background: #5285a6; }
.drop { width: 20px; color: #999; flex: none; display: grid; place-items: center; }
.sym-drop { width: 17px; }
.box { height: 22px; width: 100px; padding: 0 5px; border: 1px solid #505050; border-radius: 2px; flex: none; color: #d2d2d2; }
.signin { width: 47px; height: 21px; overflow: hidden; display: flex; align-items: center; gap: 5px; padding-left: 5px; background: #5d5d5d; color: #eee; font: 500 13px Roboto, sans-serif; flex: none; }
.statusline text { font-family: "Liberation Sans", sans-serif; }

.shelf { height: 66px; flex: none; display: flex; padding: 0 0 0 3px; border-top: 3px solid #393939; border-bottom: 1px solid #393939; margin-top: 1px; }
.shelf .grip { margin-right: 6px; }
.shelf-side { width: 20px; background: #333; flex: none; display: flex; flex-direction: column; align-items: center; justify-content: space-between; padding: 11px 0 9px; margin: 1px 3px 0 0; }
.shelf-main { flex: 1; min-width: 0; position: relative; }
.tabs { display: flex; background: #3a3a3a; height: 18px; }
.tabs button { height: 17px; line-height: 17px; padding: 0 11px; margin-top: 1px; border: solid #2f2f2f; border-width: 1px 1px 0; margin-right: 1px; color: #999; background: #3b3b3b; }
.tabs .active { background: #444; border-color: #444; color: #f0f0f0; padding: 0 10px; }
.shelf-icons { display: flex; align-items: center; height: 42px; padding-left: 4px; overflow: hidden; }
.shelf-icons button { width: 35px; flex: none; display: grid; place-items: center; }
.shelf-icons svg { width: 32px; height: 32px; }
.bar { width: 12px; height: 35px; flex: none; background: linear-gradient(#aaa, #aaa) center / 2px 100% no-repeat; }
.shelf-scroll { position: absolute; right: 9px; top: 24px; background: #333; }
.shelf text { font-family: "Liberation Sans", sans-serif; }
.o { fill: #e09a58; }
.g { fill: #c9c9c9; }
.k { fill: none; stroke: #48382a; }
.t { fill: none; stroke: #4fa9ad; stroke-width: 1.5; }
.w2 { stroke-width: 2; }

.workarea { flex: 1; min-height: 0; display: flex; border-top: 3px solid #393939; }
.toolbox { width: 46px; flex: none; display: flex; flex-direction: column; align-items: center; gap: 1px; border-right: 2px solid #393939; padding: 2px 0 6px; margin-right: 3px; }
.hgrip { height: 7px; width: 38px; background: radial-gradient(circle, #8a8a8a 0 0.5px, transparent 1px) 0 0 / 3px 3px; margin-bottom: 2px; flex: none; }
.toolbox > button { width: 36px; height: 36px; flex: none; }
.toolbox > button svg { width: 36px; height: 36px; }
.dash { stroke-width: 2; stroke-dasharray: 5 3; }
.layouts { margin-top: auto; border-top: 2px solid #aaa; padding-top: 8px; width: 36px; display: flex; flex-direction: column; align-items: center; gap: 9px; }
.layouts .cut { margin-bottom: -6px; }

.panel { flex: 1; min-width: 0; display: flex; flex-direction: column; border: 1px solid #878787; margin: 3px 4px 3px 0; }
.panel-menus { padding: 0 8px; gap: 16px; height: 19px; }
.panel-tools { display: flex; align-items: flex-start; height: 19px; overflow: hidden; }
.panel-tools button, .panel-tools button svg { width: 19px; height: 18px; flex: none; }
.ps { width: 11px; height: 18px; }
.off { background: #3e3e3e; border: 1px solid #383838; }
.viewport { flex: 1; min-height: 0; position: relative; background: #5d5d5d; overflow: hidden; }
.scene { position: absolute; width: 100%; height: 100%; }
.grid { fill: none; stroke: #464646; stroke-width: 1; }
.axis { stroke: #3f3f3f; stroke-width: 2; }
.viewcube { position: absolute; right: 8px; top: 12px; }
.viewcube text { font: 700 9px Roboto, sans-serif; fill: #666; }
.axes { position: absolute; left: 9px; bottom: 15px; }
.axes text, .camera { font: 700 11px "DejaVu Sans", sans-serif; }
.camera { position: absolute; left: 0; right: 10px; bottom: 6px; text-align: center; color: #fff; }

.side { flex: none; width: 280px; display: flex; border-left: 2px solid #393939; }
.channel { flex: 1; min-width: 0; display: flex; flex-direction: column; padding: 0 2px 3px 4px; }
.chan-icons { display: flex; justify-content: flex-end; gap: 5px; padding: 3px 3px 0; height: 23px; }
.channel > .menus { padding: 2px 7px 3px; }
.chan-list { flex: 1; background: #2b2b2b; margin-right: 1px; }
.splitter { width: 86px; height: 3px; align-self: center; margin: 2px 0 8px; background: radial-gradient(circle, #888 0 0.5px, transparent 1px) 0 0 / 3px 3px; }
.layers .tabs { height: 16px; }
.layers .tabs button { height: 15px; line-height: 14px; padding: 0 11px 0 10px; }
.layers-body { border: 1px solid #363636; border-top: 0; padding: 2px 4px 2px 2px; }
.layers-body .menus { padding: 1px 7px 2px; }
.layer-icons { display: flex; justify-content: flex-end; gap: 8px; padding: 3px 3px 6px; height: 26px; }
.layer-icons svg { width: 16px; height: 16px; }
.layer-icons .far { margin-left: 3px; }
.layer-list { height: 61px; background: #2b2b2b; }
.hscroll { display: flex; align-items: center; gap: 3px; height: 15px; padding: 0 3px; background: #3a3a3a; }
.rail { flex: 1; padding: 0 70px 0 0; }
.rail i { display: block; height: 10px; border-radius: 5px; background: #5d5d5d; }
.vtabs { width: 16px; background: #3b3b3b; flex: none; display: flex; flex-direction: column; gap: 2px; padding-top: 2px; margin-right: 1px; }
.vtabs button { writing-mode: vertical-rl; padding: 10px 0 12px; width: 16px; line-height: 16px; color: #999; background: #3c3c3c; border-bottom: 1px solid #303030; }
.vtabs .active { background: #444; color: #f0f0f0; }

.timeline, .range, .command, .helpline { flex: none; display: flex; align-items: center; padding-left: 3px; border-top: 2px solid #393939; }
.timeline .grip, .range .grip, .command .grip { margin-right: 5px; }
.timeline { height: 39px; }
.ruler { flex: 1; min-width: 0; height: 30px; display: grid; grid-template-columns: 36px repeat(23, minmax(0, 1fr)) 12px; background: #2b2b2b; color: #8c8c8c; font-size: 10px; line-height: 13px; }
.ruler span { white-space: nowrap; background: linear-gradient(#8c8c8c, #8c8c8c) 0 100% / 2px 15px no-repeat; }
.ruler b { font-weight: 400; color: #fff; width: 6px; margin-left: 6px; background: #5a5a5a; display: flex; align-items: flex-end; }
.field { height: 25px; width: 88px; padding: 0 6px; background: #2b2b2b; border-radius: 2px; flex: none; color: #c8c8c8; }
.field.cur { height: 19px; margin: 2px 7px 0; }
.playback { display: flex; padding-right: 9px; }
.playback button, .playback svg { width: 23px; height: 22px; }

.range { height: 35px; }
.range .field { margin-right: 8px; }
.range .grip { margin-right: 6px; }
.range-track { flex: 1; min-width: 0; height: 25px; background: #3a3a3a; border: 1px solid #373737; margin-right: 7px; padding: 2px 0; }
.range-bar { width: 63%; height: 20px; border-radius: 3px; background: #5d5d5d; display: flex; align-items: center; gap: 4px; padding: 0 3px; }
.range-bar button { width: 14px; height: 14px; border-radius: 3px; background: #8f8f8f; }
.range-bar .end { margin-left: auto; }
.range .thin { margin-left: -8px; }
.range .box { height: 24px; padding: 0 4px; }
.d1 { width: 26px; }
.d2 { width: 29px; }
.fps { width: 95px; margin-left: 3px; }
.loop { margin: 0 0 0 11px; }
.prefs { margin: 0 8px 0 6px; }

.command { height: 34px; }
.command label { margin: 0 14px 0 11px; color: #eee; }
.command .mel { flex: 404; height: 23px; }
.minigrip { width: 8px; height: 10px; background: radial-gradient(circle, #888 0 0.5px, transparent 1px) 2px 0 / 8px 3px; }
.result { flex: 726; height: 24px; background: #2b2b2b; border-radius: 2px; }
.script { margin: 0 8px 0 6px; }
.helpline { height: 24px; font-size: 9px; }
.helpline span { margin: 0 auto 0 16px; color: #b8b8b8; }
.helpline svg { align-self: flex-end; }
```

FILE: script.js
```js
// Ground grid: 24 x 24 cells seen corner-on through a simple perspective camera.
const CELLS = 24, SINK = 0.338, SPAN = 334.5, RISE = 467.3, HORIZON = -71.3, CENTER = 512.5;

function project(a, b) {
  const depth = (a + b) / 2, side = (a - b) / 2, scale = 1 + SINK * depth;
  return `${(CENTER + SPAN * side / scale).toFixed(1)} ${(HORIZON + RISE / scale).toFixed(1)}`;
}

function lines(at) {
  return `M${project(at, -1)}L${project(at, 1)}M${project(-1, at)}L${project(1, at)}`;
}

let path = "";
for (let i = 0; i <= CELLS; i++) path += lines(i / CELLS * 2 - 1);
document.getElementById("grid").setAttribute("d", path);
document.getElementById("gridAxis").setAttribute("d", lines(0));
```
